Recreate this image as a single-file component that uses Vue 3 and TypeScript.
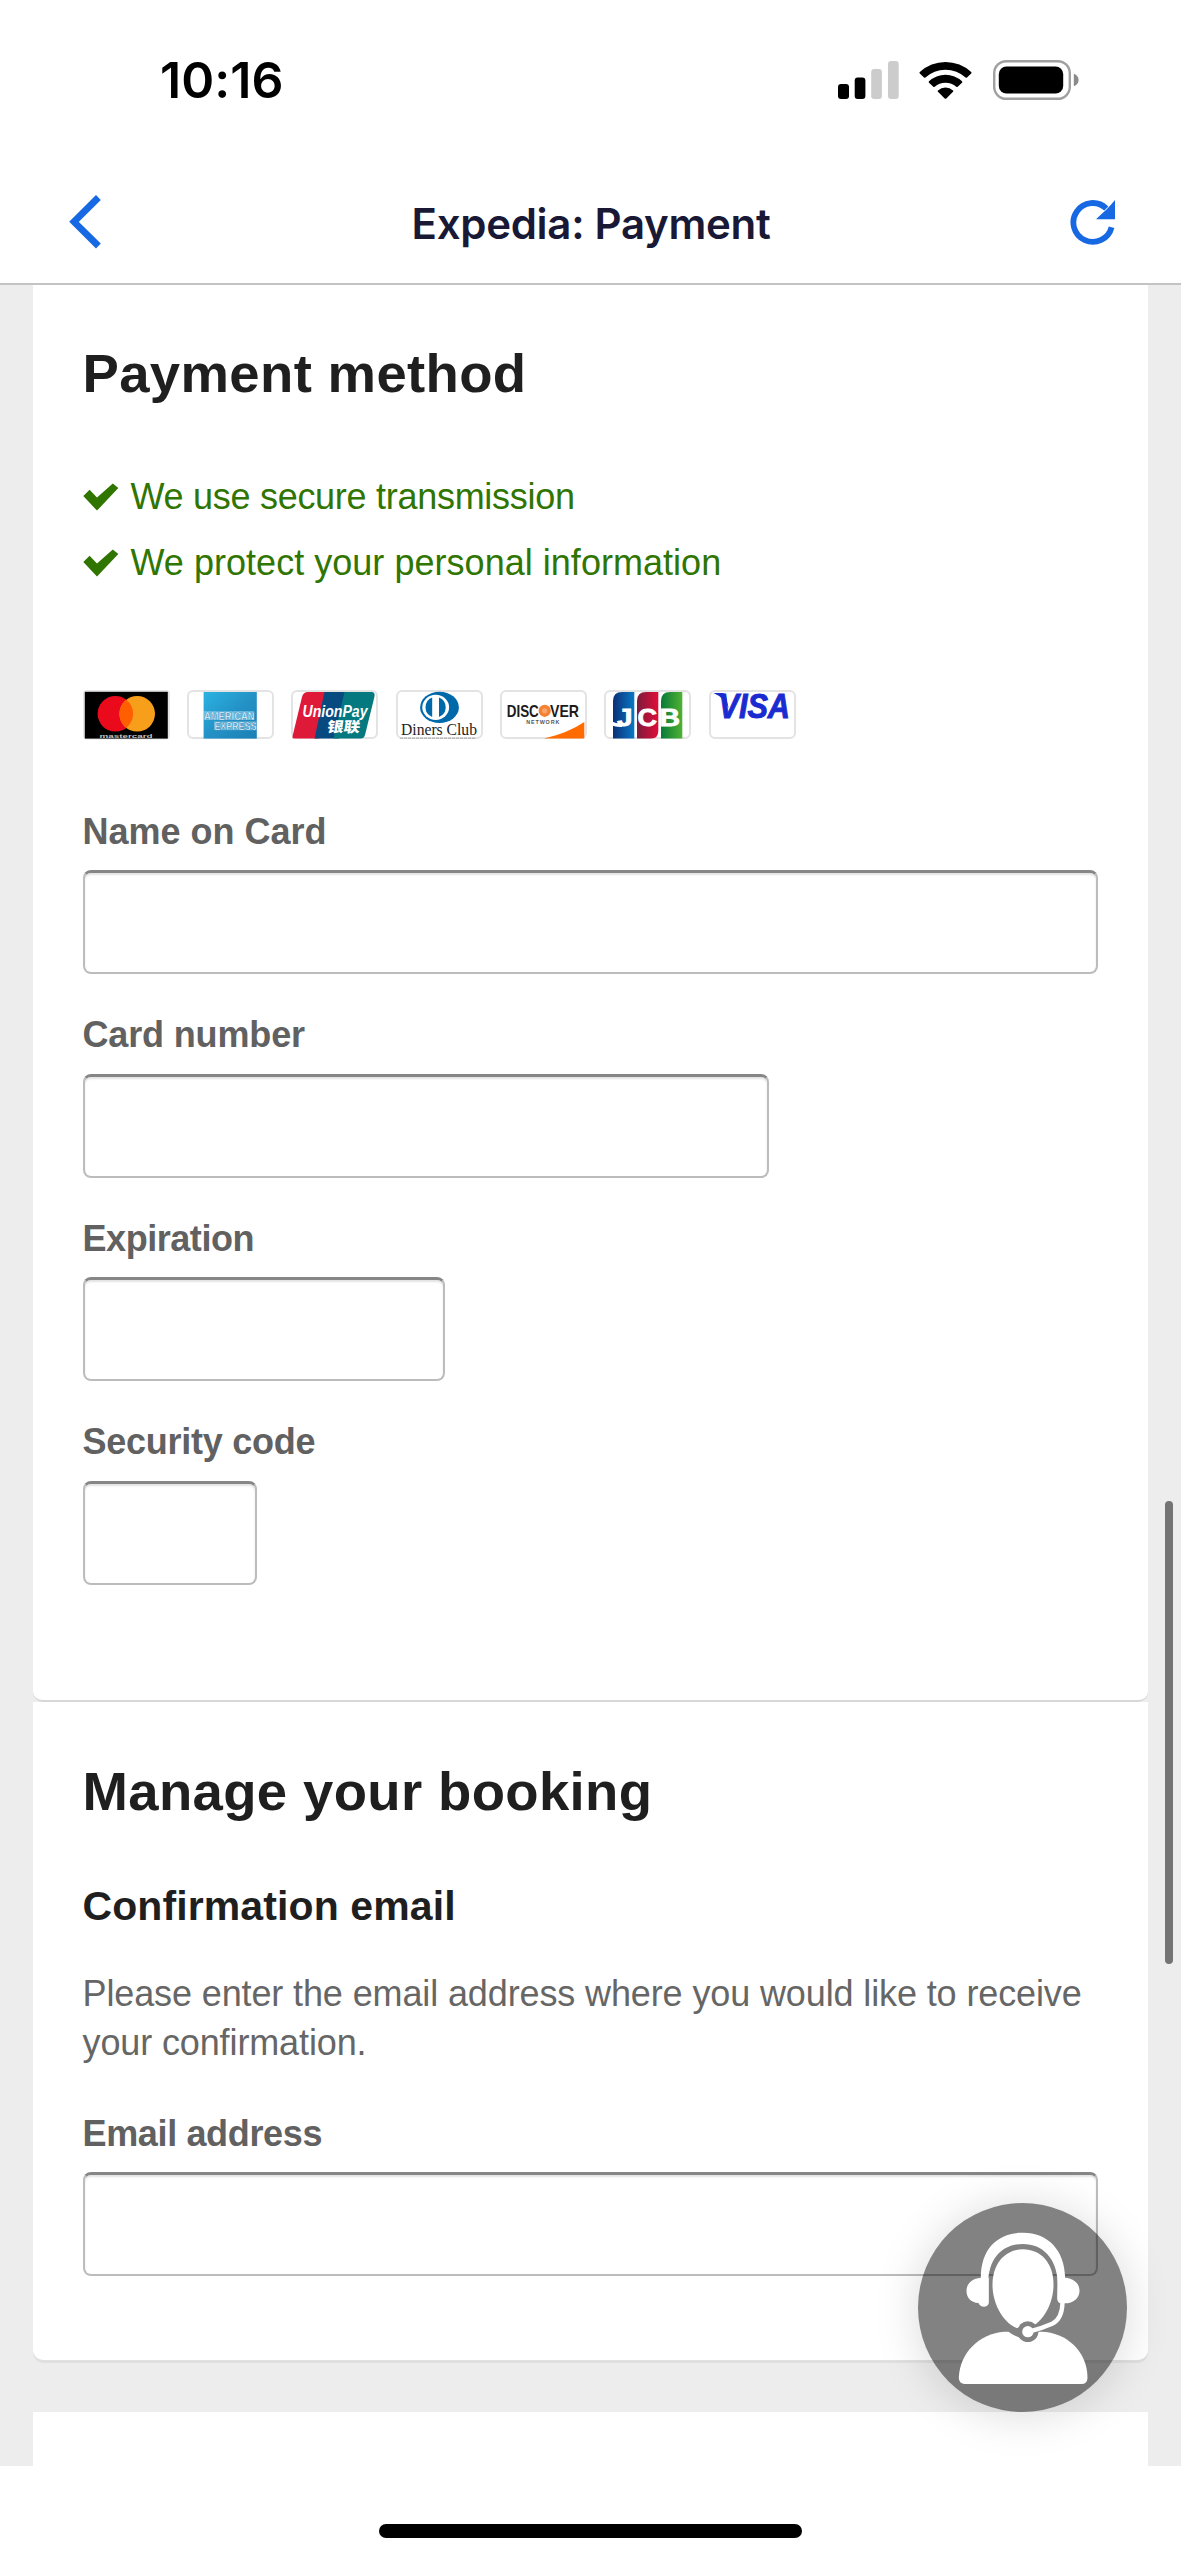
<script setup lang="ts">
interface Assurance {
  text: string
  tracking: string
}

interface Field {
  id: string
  label: string
  size: 'full' | 'number' | 'date' | 'code'
  tracking: string
}

const assurances: Assurance[] = [
  { text: 'We use secure transmission', tracking: '-0.28px' },
  { text: 'We protect your personal information', tracking: '0.03px' },
]

const fields: Field[] = [
  { id: 'name', label: 'Name on Card', size: 'full', tracking: '0px' },
  { id: 'number', label: 'Card number', size: 'number', tracking: '-0.15px' },
  { id: 'expiration', label: 'Expiration', size: 'date', tracking: '-0.45px' },
  { id: 'security', label: 'Security code', size: 'code', tracking: '-0.25px' },
]
</script>

<template>
  <div class="screen">
    <header class="top">
      <div class="status">
        <span class="clock">10:16</span>
        <div class="indicators">
          <svg class="signal" width="61" height="38" viewBox="0 0 61 38">
            <rect x="0" y="23" width="11" height="15" rx="3" />
            <rect x="16.7" y="16.5" width="10.7" height="21.5" rx="3" />
            <rect x="33.2" y="8" width="10.7" height="30" rx="3" fill="#cccccc" />
            <rect x="50" y="0" width="10.7" height="38" rx="3" fill="#cccccc" />
          </svg>
          <svg class="wifi" width="53" height="38" viewBox="0 0 53 38">
            <path d="M0.8 11.1 A37.5 37.5 0 0 1 52.2 11.1 Q52.8 11.8 52.2 12.5 L48 16.6 Q47.3 17.1 46.6 16.6 A29.6 29.6 0 0 0 6.4 16.6 Q5.7 17.1 5 16.6 L0.8 12.5 Q0.2 11.8 0.8 11.1Z" />
            <path d="M10 20.3 A24.2 24.2 0 0 1 43 20.3 Q43.7 21 43 21.7 L38.7 25.8 Q38 26.4 37.3 25.8 A16.2 16.2 0 0 0 15.7 25.8 Q15 26.4 14.3 25.8 L10 21.7 Q9.3 21 10 20.3Z" />
            <path d="M19 29.4 A11 11 0 0 1 34 29.4 Q34.7 30.1 34 30.8 L27.3 37.4 Q26.5 38 25.7 37.4 L19 30.8 Q18.3 30.1 19 29.4Z" />
          </svg>
          <svg class="battery" width="86" height="40" viewBox="0 0 86 40">
            <rect x="1.2" y="1.2" width="75.6" height="37.6" rx="12" fill="none" stroke="#a0a0a0" stroke-width="2.4" />
            <rect x="5.8" y="6.6" width="64.4" height="27" rx="7.6" />
            <path d="M80.8 13.8 Q85.6 15.6 85.6 20 Q85.6 24.4 80.8 26.2Z" fill="#8b8b8b" />
          </svg>
        </div>
      </div>
      <nav class="nav">
        <svg class="back" width="34" height="56" viewBox="0 0 34 56">
          <path d="M30.4 3.5 L6 27.8 L30.4 52" fill="none" stroke="#1668e3" stroke-width="6.8" />
        </svg>
        <span class="title">Expedia: Payment</span>
        <svg class="reload" width="46" height="46" viewBox="0 0 46 46">
          <path d="M41.6 28.2 A19.4 19.4 0 1 1 36.3 9.5" fill="none" stroke="#1668e3" stroke-width="5.8" />
          <path d="M45 1 V20.2 H26 L32.6 14 L36 11 Q40.5 6.5 45 1Z" fill="#1668e3" />
        </svg>
      </nav>
    </header>

    <main class="page">
      <section class="card payment">
        <h1>Payment method</h1>
        <ul class="assurances">
          <li v-for="line in assurances" :key="line.text">
            <svg width="36" height="28" viewBox="0 0 36 28">
              <path d="M0.3 13 L6.6 6.8 L14 14.6 L29.8 0.4 L35.3 5 L14 27.6Z" fill="#2f7500" />
            </svg>
            <span :style="{ letterSpacing: line.tracking }">{{ line.text }}</span>
          </li>
        </ul>

        <div class="brands">
          <svg class="brand" viewBox="0 0 87 49">
            <rect x="1" y="1" width="85" height="47.6" rx="3" fill="#fff" stroke="#e6e6e6" stroke-width="2" />
            <rect x="1.8" y="1.8" width="83" height="46.8" fill="#000" />
            <circle cx="32.4" cy="23.8" r="17.8" fill="#ea0a1c" />
            <circle cx="54.2" cy="23.8" r="17.8" fill="#f79f1a" />
            <path d="M43.3 9.8 A17.8 17.8 0 0 1 43.3 37.8 A17.8 17.8 0 0 1 43.3 9.8Z" fill="#ff5f00" />
            <text x="16.5" y="48" font-size="5.6" font-weight="700" fill="#c4c4c4" textLength="53" lengthAdjust="spacingAndGlyphs">mastercard</text>
          </svg>
          <svg class="brand" viewBox="0 0 87 49">
            <defs>
              <linearGradient id="amex" x1="0" y1="0" x2="1" y2="1">
                <stop offset="0" stop-color="#2bb3e2" />
                <stop offset="0.5" stop-color="#2492c6" />
                <stop offset="1" stop-color="#1b7fb4" />
              </linearGradient>
            </defs>
            <rect x="1" y="1" width="85" height="47" rx="5" fill="#fff" stroke="#e3e3e3" stroke-width="2" />
            <rect x="16.6" y="2" width="53.2" height="46.6" fill="url(#amex)" />
            <rect x="17" y="21" width="50" height="9" fill="#8fcde8" opacity="0.65" />
            <rect x="27" y="31.4" width="42.5" height="8.8" fill="#8fcde8" opacity="0.65" />
            <text x="17" y="29.8" font-size="11.5" font-weight="700" fill="#fff" stroke="#2492c6" stroke-width="0.5" textLength="50.5" lengthAdjust="spacingAndGlyphs">AMERICAN</text>
            <text x="27.4" y="39.9" font-size="11.5" font-weight="700" fill="#fff" stroke="#2089bd" stroke-width="0.5" textLength="42" lengthAdjust="spacingAndGlyphs">EXPRESS</text>
          </svg>
          <svg class="brand" viewBox="0 0 87 49">
            <rect x="1" y="1" width="85" height="47" rx="5" fill="#fff" stroke="#e3e3e3" stroke-width="2" />
            <path d="M17 2 H40 L28 48.6 H2.5 Q1 48.6 1.6 46 L11 7 Q12.3 2 17 2Z" fill="#df1a38" />
            <path d="M33.5 2 H60 L48 48.6 H23.5Z" fill="#074a80" />
            <path d="M53.5 2 H80.5 Q84.5 2 83.4 7 L74 45 Q73 48.6 69.5 48.6 H42.5Z" fill="#04797f" />
            <text x="11.5" y="26.8" font-size="16" font-weight="700" font-style="italic" fill="#fff" textLength="65" lengthAdjust="spacingAndGlyphs">UnionPay</text>
            <text class="cjk" x="36" y="41.8" font-size="14.5" font-weight="900" fill="#fff" textLength="33" lengthAdjust="spacingAndGlyphs" transform="skewX(-8) translate(5.4 0)">银联</text>
          </svg>
          <svg class="brand" viewBox="0 0 87 49">
            <rect x="1" y="1" width="85" height="47" rx="5" fill="#fff" stroke="#e3e3e3" stroke-width="2" />
            <ellipse cx="43.5" cy="17.4" rx="19.4" ry="15.6" fill="#0069aa" />
            <ellipse cx="39.7" cy="17.3" rx="13.4" ry="12.6" fill="#fff" />
            <path d="M36.2 7.6 A10.4 10.4 0 0 0 36.2 27Z" fill="#0069aa" />
            <path d="M43 7.6 A10.4 10.4 0 0 1 43 27Z" fill="#0069aa" />
            <text class="serif" x="5" y="44.6" font-size="17.4" fill="#222" textLength="76" lengthAdjust="spacingAndGlyphs">Diners Club</text>
            <path d="M4 48.2 H80" stroke="#999" stroke-width="0.8" stroke-dasharray="3 1" />
          </svg>
          <svg class="brand" viewBox="0 0 87 49">
            <rect x="1" y="1" width="85" height="47" rx="5" fill="#fff" stroke="#e3e3e3" stroke-width="2" />
            <path d="M84.3 32 V48.6 H44 Q68 43 84.3 32Z" fill="#ff6b00" />
            <text x="6.8" y="26.7" font-size="16.4" font-weight="700" fill="#1b1b1b" textLength="32" lengthAdjust="spacingAndGlyphs">DISC</text>
            <circle cx="44.7" cy="20.8" r="6.1" fill="#f58233" />
            <circle cx="44.7" cy="20.8" r="2.6" fill="#f9a66c" />
            <text x="50" y="26.7" font-size="16.4" font-weight="700" fill="#1b1b1b" textLength="29" lengthAdjust="spacingAndGlyphs">VER</text>
            <text x="26.3" y="34.4" font-size="5.4" font-weight="700" fill="#555" textLength="33" lengthAdjust="spacing">NETWORK</text>
          </svg>
          <svg class="brand" viewBox="0 0 87 49">
            <defs>
              <linearGradient id="jcb-blue"><stop offset="0" stop-color="#0c2f78" /><stop offset="1" stop-color="#0878c4" /></linearGradient>
              <linearGradient id="jcb-red"><stop offset="0" stop-color="#7c1c3c" /><stop offset="1" stop-color="#e10c38" /></linearGradient>
              <linearGradient id="jcb-green"><stop offset="0" stop-color="#087a38" /><stop offset="1" stop-color="#4eb232" /></linearGradient>
            </defs>
            <rect x="1" y="1" width="85" height="47" rx="5" fill="#fff" stroke="#e3e3e3" stroke-width="2" />
            <path d="M18 2 H30.3 V48.6 H9 V11 Q9 2 18 2Z" fill="url(#jcb-blue)" />
            <path d="M42 2 H54.3 V41 Q54.3 48.6 47 48.6 H33 V11 Q33 2 42 2Z" fill="url(#jcb-red)" />
            <path d="M66 2 H78.3 V48.6 H57 V11 Q57 2 66 2Z" fill="url(#jcb-green)" />
            <text x="13" y="36.4" font-size="23.4" font-weight="700" fill="#fff" stroke="#fff" stroke-width="0.8" textLength="15.5" lengthAdjust="spacingAndGlyphs">J</text>
            <path d="M8 31.5 Q13 34 18 33.4 V37 Q12 37.4 8 35.6Z" fill="#fff" />
            <text x="33.5" y="36.4" font-size="23.4" font-weight="700" fill="#fff" stroke="#fff" stroke-width="0.8" textLength="19.5" lengthAdjust="spacingAndGlyphs">C</text>
            <text x="55.5" y="36.2" font-size="23" font-weight="700" fill="#fff" stroke="#fff" stroke-width="0.8" textLength="20.5" lengthAdjust="spacingAndGlyphs">B</text>
          </svg>
          <svg class="brand" viewBox="0 0 87 49">
            <rect x="1" y="1" width="85" height="47" rx="5" fill="#fff" stroke="#e3e3e3" stroke-width="2" />
            <path d="M4.5 3 H13 Q16 3 16.8 6 L19.6 18 Q15 7.5 4.5 3Z" fill="#1a2bd0" />
            <text x="9.5" y="28.4" font-size="34.5" font-weight="700" font-style="italic" fill="#1a2bd0" stroke="#1a2bd0" stroke-width="1" textLength="71.5" lengthAdjust="spacingAndGlyphs">VISA</text>
          </svg>
        </div>

        <div class="fields">
          <div v-for="field in fields" :key="field.id" class="field">
            <label :for="field.id" :style="{ letterSpacing: field.tracking }">{{ field.label }}</label>
            <input :id="field.id" type="text" :class="field.size" />
          </div>
        </div>
      </section>

      <section class="card booking">
        <h1>Manage your booking</h1>
        <h2>Confirmation email</h2>
        <p>Please enter the email address where you would like to receive your confirmation.</p>
        <div class="field">
          <label class="email-label" for="email">Email address</label>
          <input id="email" type="text" class="full" />
        </div>
      </section>

      <section class="card next"></section>
    </main>

    <footer class="home"><div class="home-bar"></div></footer>

    <div class="scroll-thumb"></div>

    <button class="support" type="button" aria-label="Support">
      <svg viewBox="0 0 626 627">
        <defs>
          <mask id="mic-gap">
            <rect width="626" height="627" fill="#fff" />
            <circle cx="329" cy="386" r="31" fill="#000" />
          </mask>
          <mask id="neck-gap">
            <rect width="626" height="627" fill="#fff" />
            <path d="M258 372 Q282 404 329 408 Q350 400 366 372Z" fill="#000" />
            <circle cx="329" cy="385" r="32" fill="#000" />
          </mask>
        </defs>
        <g fill="#fff">
          <path d="M188 226 C188 130 245 89 315 89 C388 89 440 140 441 226 L419 240 C416 166 374 123 314 123 C252 123 211 166 210 240Z" />
          <path d="M188 224 H212 V298 Q212 310 198 311 Q185 311 181 300 C157 298 145 283 145 263 C145 242 162 226 188 224Z" />
          <path d="M418 224 H440 C467 225 484 242 484 263 C484 285 466 301 440 301 H430 Q417 301 417 286Z" />
          <path mask="url(#mic-gap)" d="M314 139 C368 139 406 180 406 245 C406 314 360 378 314 378 C268 378 223 314 223 245 C223 180 262 139 314 139Z" />
          <path mask="url(#neck-gap)" d="M258 386 H370 C444 388 508 444 508 525 Q507 543 490 543 H140 Q122 542 122 524 C124 450 184 391 258 386Z" />
          <circle cx="329" cy="386" r="17" />
          <path d="M335 385 Q370 376 402 362 Q432 348 433 298" fill="none" stroke="#fff" stroke-width="13" />
        </g>
      </svg>
    </button>
  </div>
</template>

<style>
html,
body {
  margin: 0;
  background: #fff;
}
</style>

<style scoped>
.screen {
  position: relative;
  width: 1181px;
  height: 2560px;
  overflow: hidden;
  background: #fff;
  font-family: "Liberation Sans", Arial, sans-serif;
  color: #1f1f1f;
}

.top {
  box-sizing: border-box;
  height: 285px;
  border-bottom: 2px solid #c3c3c3;
  background: #fff;
}

.status {
  display: flex;
  justify-content: space-between;
  align-items: center;
  height: 160px;
  padding: 0 102px 0 160px;
}

.clock {
  font-family: Inter, sans-serif;
  font-size: 50px;
  font-weight: 600;
  color: #000;
  letter-spacing: 0.1px;
}

.indicators {
  display: flex;
  align-items: center;
}

.wifi {
  margin-left: 20px;
}

.battery {
  margin-left: 21px;
}

.nav {
  display: flex;
  justify-content: space-between;
  align-items: center;
  height: 123px;
  padding: 0 65px 0 68px;
}

.title {
  font-family: Inter, sans-serif;
  font-size: 42px;
  font-weight: 600;
  line-height: 50px;
  letter-spacing: -0.3px;
  color: #191936;
  margin: 4px 0 0 10px;
}

.page {
  height: 2181px;
  overflow: hidden;
  background: #ededed;
  padding: 0 33px;
}

.card {
  box-sizing: border-box;
  background: #fff;
  padding-left: 49.5px;
  padding-right: 50px;
}

.payment {
  height: 1417px;
  padding-top: 59px;
  border-radius: 0 0 10px 10px;
  border-bottom: 2px solid #d7d7d7;
}

.booking {
  height: 658px;
  padding-top: 60px;
  border-radius: 0 0 10px 10px;
  box-shadow: 0 3px 0 #e0e0e0;
}

.next {
  height: 60px;
  margin-top: 51.5px;
}

h1,
h2,
p,
ul {
  margin: 0;
  padding: 0;
}

h1 {
  font-size: 54.5px;
  line-height: 60px;
  letter-spacing: 0.35px;
}

.assurances {
  margin-top: 59.5px;
  list-style: none;
  color: #2f7500;
  font-size: 36px;
  line-height: 66px;
}

.assurances li {
  display: flex;
  align-items: center;
  gap: 12px;
  height: 66px;
}

.brands {
  display: flex;
  gap: 17.4px;
  margin-top: 94px;
}

.brand {
  width: 87px;
  height: 49px;
  overflow: visible;
  font-family: "Liberation Sans", Arial, sans-serif;
}

.serif {
  font-family: "Liberation Serif", serif;
}

.cjk {
  font-family: "Noto Sans CJK SC", sans-serif;
}

.fields {
  display: flex;
  flex-direction: column;
  gap: 36px;
  margin-top: 68px;
}

.field {
  display: flex;
  flex-direction: column;
  align-items: flex-start;
  gap: 14.5px;
}

label {
  font-size: 36px;
  font-weight: 700;
  line-height: 49px;
  color: #616161;
}

.email-label {
  letter-spacing: -0.35px;
}

input {
  box-sizing: border-box;
  height: 104px;
  border: 2px solid #bcbcbc;
  border-top: 3px solid #868686;
  border-radius: 8px;
  background: #fff;
  box-shadow: inset 0 2px 2px #e3e3e3;
}

.full {
  width: 1015.5px;
}

.number {
  width: 686px;
}

.date {
  width: 362.5px;
}

.code {
  width: 174px;
}

h2 {
  margin-top: 60px;
  font-size: 41px;
  line-height: 49px;
  letter-spacing: 0.1px;
}

p {
  margin: 38px -20px 41.5px 0;
  font-size: 36px;
  line-height: 49px;
  letter-spacing: -0.12px;
  color: #666;
}

.home {
  display: flex;
  justify-content: center;
  padding-top: 58px;
}

.home-bar {
  width: 423px;
  height: 14px;
  border-radius: 7px;
  background: #000;
}

.scroll-thumb {
  position: absolute;
  left: 1164.5px;
  top: 1501px;
  width: 8.5px;
  height: 463px;
  border-radius: 5px;
  background: #747474;
}

.support {
  position: absolute;
  left: 917.5px;
  top: 2203px;
  width: 209px;
  height: 209px;
  padding: 0;
  border: 0;
  border-radius: 50%;
  background: rgba(0, 0, 0, 0.49);
  box-shadow: 0 3px 46px rgba(0, 0, 0, 0.15);
}

.support svg {
  display: block;
  width: 209px;
  height: 209px;
}
</style>
